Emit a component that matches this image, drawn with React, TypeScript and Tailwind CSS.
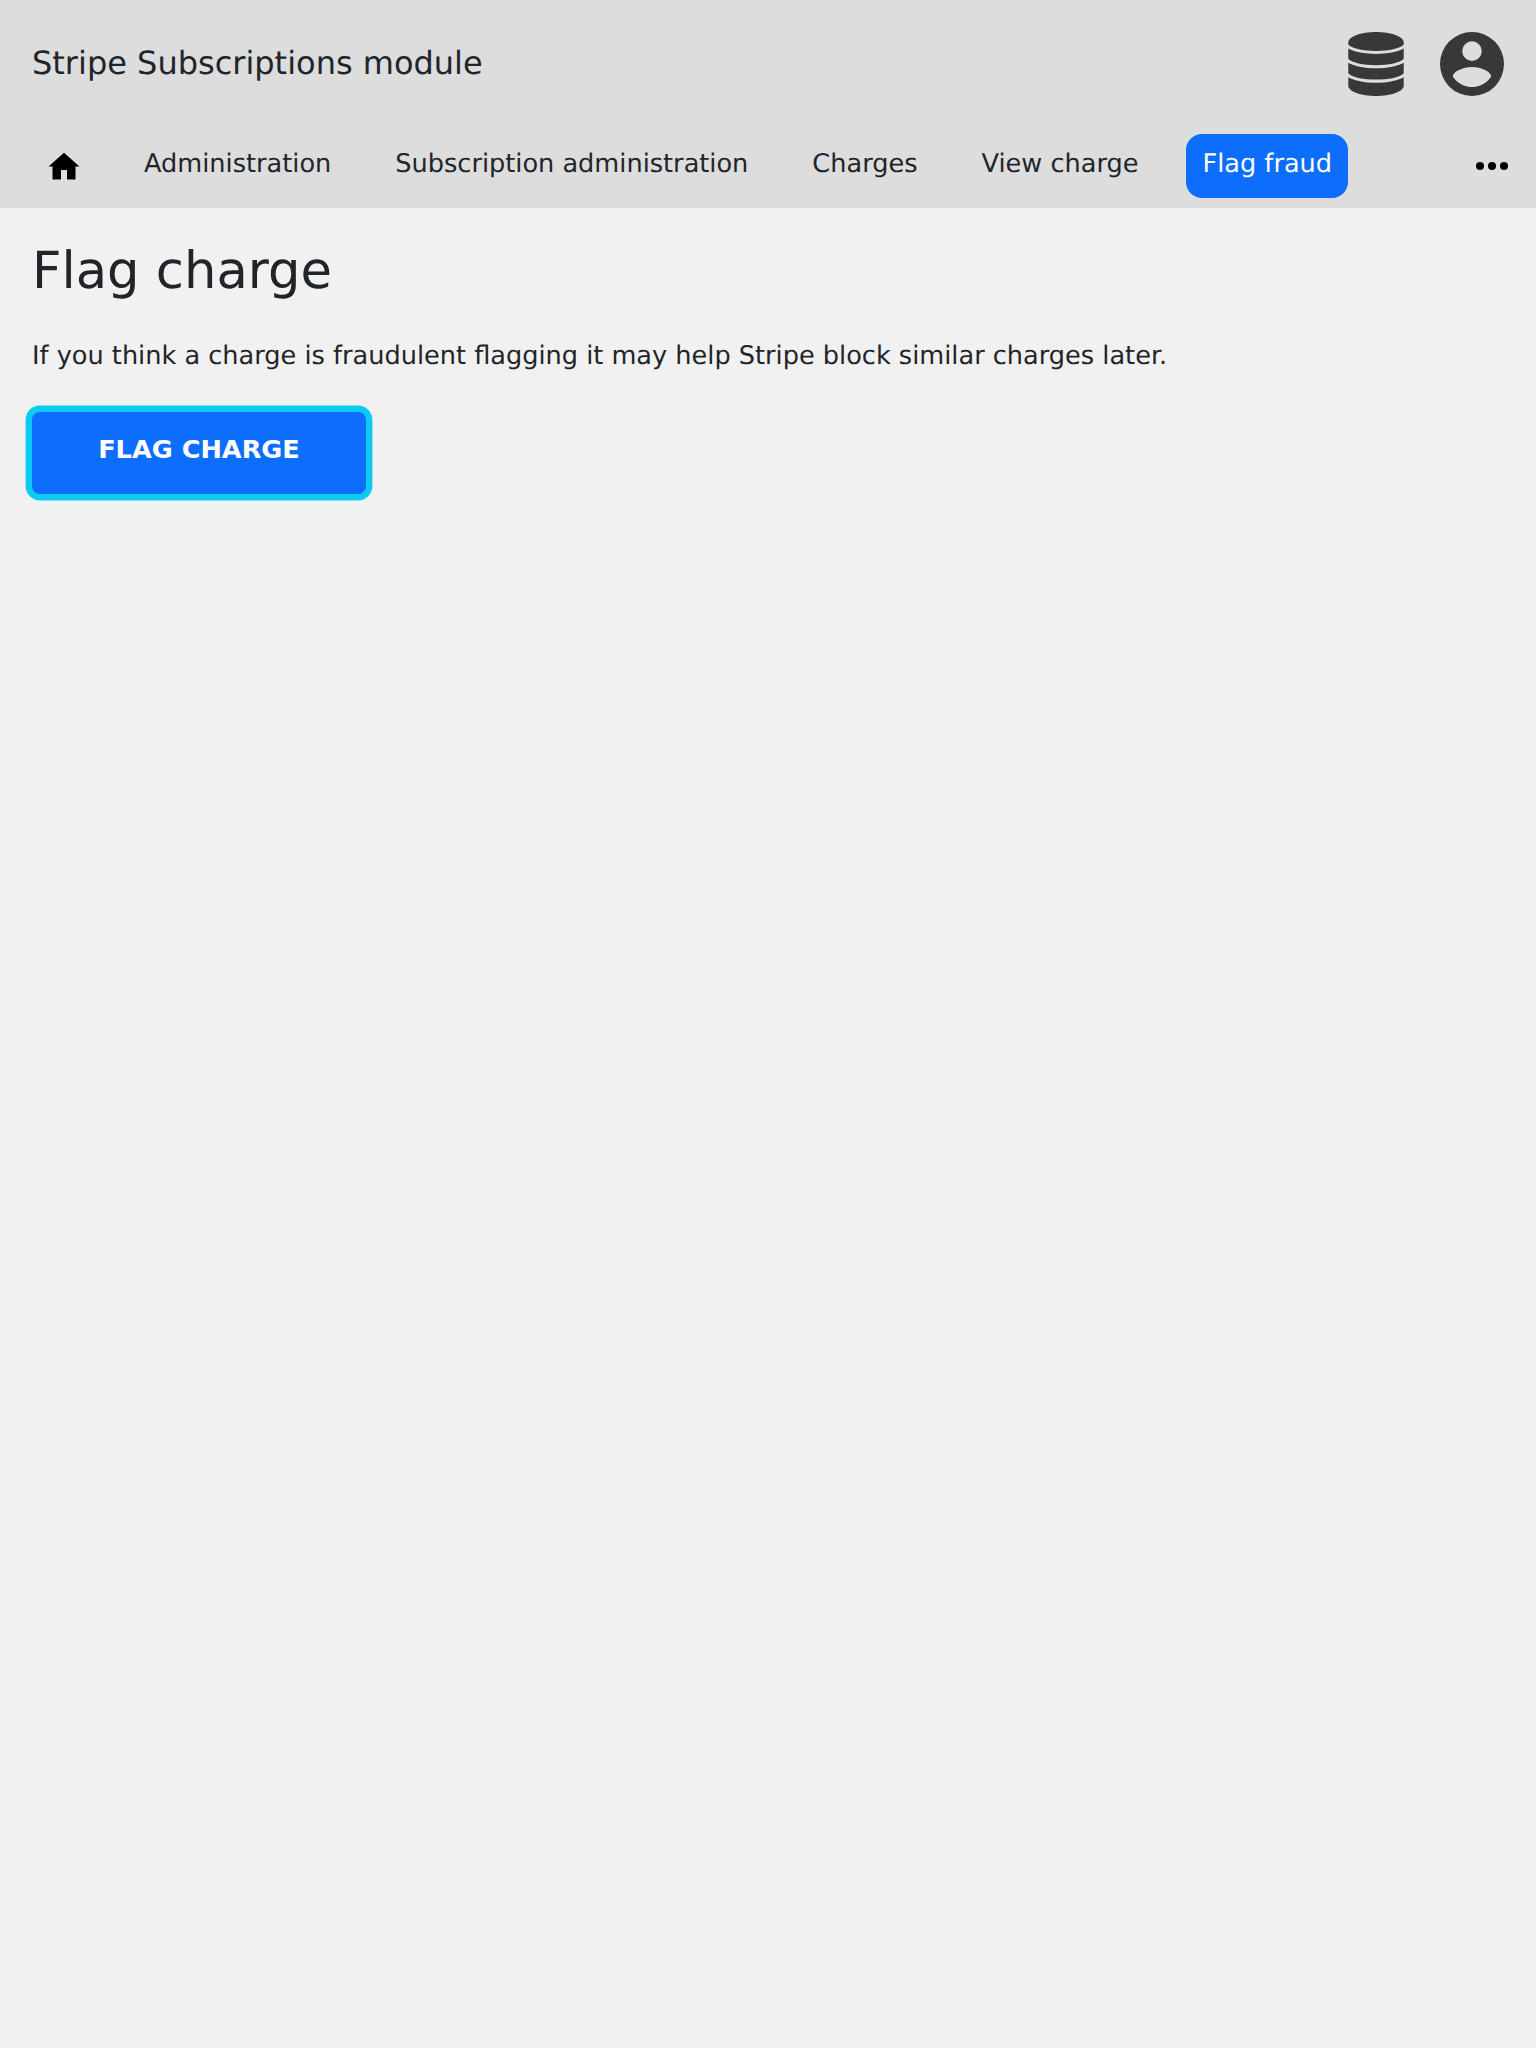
const items = ["Administration", "Subscription administration", "Charges", "View charge"];

function DatabaseIcon() {
  return (
    <svg viewBox="0 0 56 64" className="h-16 w-14" fill="currentColor">
      <path d="M28 0C43 0 55.700 4.600 55.700 10.300V12.500C52 16.500 41 18.900 28 18.900S4 16.500 .3 12.500V10.300C.3 4.600 13 0 28 0Z" />
      <path d="M.3 16.500C6 20 17 21.900 28 21.900S50 20 55.700 16.500V26.800C52 31 41 33.200 28 33.200S4 31 .3 26.800Z" />
      <path d="M.3 30.800C6 34.300 17 36.300 28 36.300S50 34.300 55.700 30.800V41.300C52 45.400 41 47.600 28 47.600S4 45.400 .3 41.300Z" />
      <path d="M.3 45.200C6 48.700 17 50.700 28 50.700S50 48.700 55.700 45.200V53.700C55.700 59.400 43 64 28 64S.3 59.400 .3 53.700Z" />
    </svg>
  );
}

function AccountIcon() {
  return (
    <svg viewBox="0 0 64 64" className="size-16" fill="currentColor" fillRule="evenodd">
      <path d="M32 0a32 32 0 1 1 0 64a32 32 0 1 1 0-64ZM32 9.300a9.800 9.800 0 1 0 0 19.600a9.800 9.800 0 1 0 0-19.600ZM32 34.900C23 34.900 12.800 39.500 12.800 44.500C17 51 24.500 55.100 32 55.100S47 51 51.200 44.500C51.200 39.500 41 34.900 32 34.900Z" />
    </svg>
  );
}

function HomeIcon() {
  return (
    <svg viewBox="0 0 32 28" className="h-7 w-8" fill="currentColor">
      <path d="M16 .7.5 14.400H4.500V27.500H13V18H19V27.500H27.500V14.400H31.500Z" />
    </svg>
  );
}

export default function App() {
  return (
    <div className="min-h-[2048px] bg-[#f1f1f1] font-['DejaVu_Sans',sans-serif] text-[#212529] [text-rendering:geometricPrecision]">
      <header className="h-52 bg-[#dddddd]">
        <div className="flex h-32 justify-between px-8">
          <h1 className="pt-[39px] text-[32px] leading-12">Stripe Subscriptions module</h1>
          <div className="flex gap-9 pt-8 text-[#383838]">
            <DatabaseIcon />
            <AccountIcon />
          </div>
        </div>
        <nav className="flex items-start pt-1.5 pl-8">
          <a className="mr-8 flex h-16 w-16 items-center justify-center text-black"><HomeIcon /></a>
          {items.map((t) => (
            <a key={t} className="mr-8 h-16 px-4 pt-2.5 text-[25.6px] leading-10">{t}</a>
          ))}
          <a className="h-16 rounded-2xl bg-[#0d6efd] px-4 pt-2.5 text-[25.6px] leading-10 text-white">Flag fraud</a>
          <svg viewBox="0 0 32 8" className="mt-7 mr-7 ml-auto h-2 w-8 text-black" fill="currentColor">
            <circle cx="4" cy="4" r="4" />
            <circle cx="16" cy="4" r="4" />
            <circle cx="28" cy="4" r="4" />
          </svg>
        </nav>
      </header>
      <main className="px-8 pt-[33px]">
        <h2 className="text-[51.2px] leading-[61px]">Flag charge</h2>
        <p className="mt-[35px] text-[25.6px] leading-[38px]">If you think a charge is fraudulent flagging it may help Stripe block similar charges later.</p>
        <button className="mt-[37px] block h-[82px] w-[334px] rounded-lg bg-[#0d6efd] pb-2 text-[25.6px] font-bold text-white shadow-[0_0_0_6.4px_#0dcaf0]">FLAG CHARGE</button>
      </main>
    </div>
  );
}
